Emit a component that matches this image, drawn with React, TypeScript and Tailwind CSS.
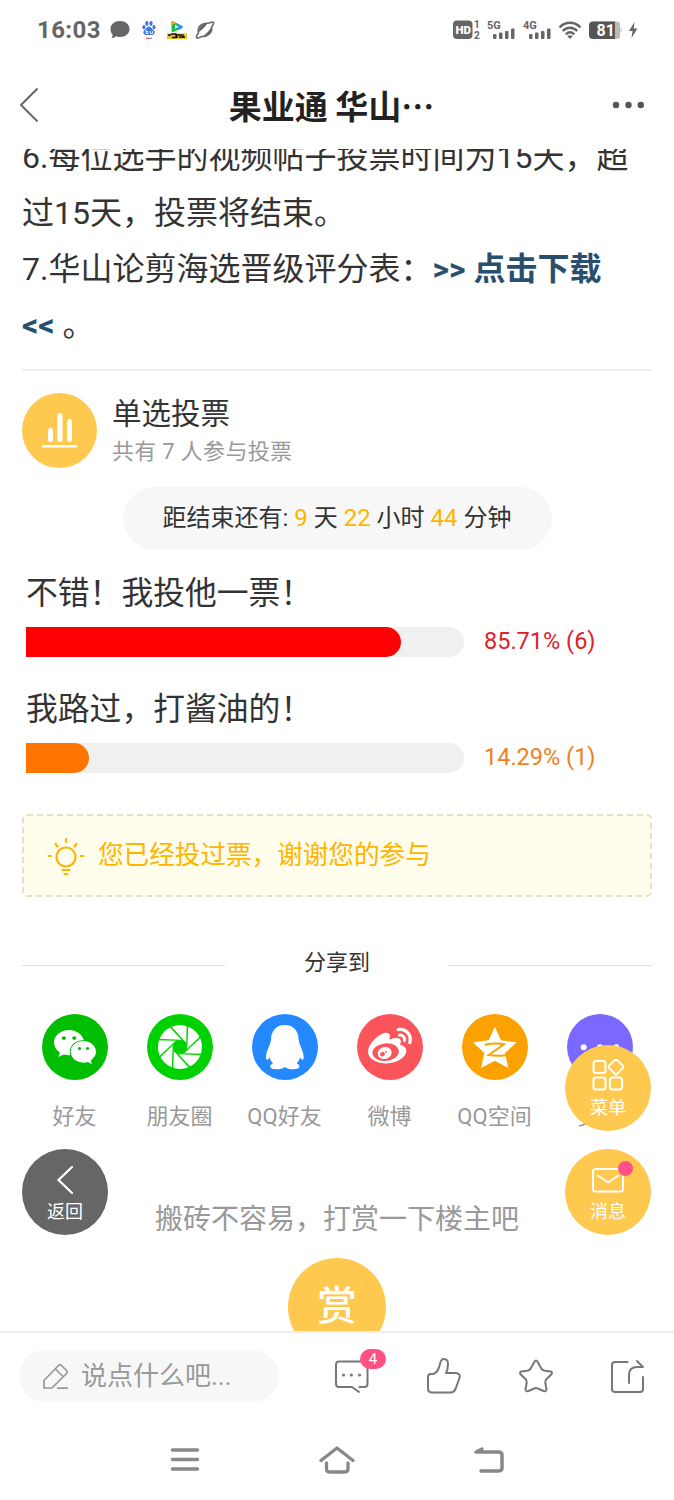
import type { ReactNode } from "react";
import { FaWeibo, FaWeixin } from "react-icons/fa";

interface PollOption {
    id: number;
    label: string;
    percent: number;
    votes: number;
    barClass: string;
    textClass: string;
}

interface ShareTarget {
    name: string;
    bg: string;
    icon: ReactNode;
}

const pollOptions: PollOption[] = [
    { id: 1, label: "不错！我投他一票！", percent: 85.71, votes: 6, barClass: "bg-[#ff0003]", textClass: "text-[#e0202a]" },
    { id: 2, label: "我路过，打酱油的！", percent: 14.29, votes: 1, barClass: "bg-[#ff7500]", textClass: "text-[#f08020]" },
];

const blades = [0, 45, 90, 135, 180, 225, 270, 315];

function MomentsIcon() {
    return (
        <svg viewBox="-99 -99 198 198" className="size-full">
            <circle r="66" fill="#fff" />
            <circle r="21" fill="#00d100" />
            {blades.map((angle) => (
                <path key={angle} d="M20 -68 L25 -68 L22 2 L18 8Z" fill="#00d100" transform={`rotate(${angle})`} />
            ))}
        </svg>
    );
}

function PenguinIcon() {
    return (
        <svg viewBox="756 72 198 198" className="size-full">
            <path
                fill="#fff"
                d="M854.500 105C828 105 813 124 813 150C810 168 798 183 798 202C798 212 804 212 809 202C811 211 815 217 819 220C805 227 808 238 829 238C841 238 849 236 854.500 231C860 236 868 238 880 238C901 238 904 227 890 220C894 217 898 211 900 202C905 212 911 212 911 202C911 183 899 168 896 150C896 124 881 105 854.500 105Z"
            />
        </svg>
    );
}

function QzoneIcon() {
    return (
        <svg viewBox="374 72 198 198" className="size-full">
            <path
                fill="#fff"
                d="M472.500 110L491 151L538 157L503 189L513 234L472.500 212L431 234L441 189L407 157L454 151Z"
            />
            <path d="M442 164Q475 158 500 163L454 195Q485 199 520 195" fill="none" stroke="#fba100" strokeWidth="6" />
        </svg>
    );
}

function MoreDots() {
    return (
        <svg viewBox="688 72 198 198" className="size-full" fill="#fff">
            <circle cx="738" cy="172" r="9" />
            <circle cx="787" cy="172" r="9" />
            <circle cx="836" cy="172" r="9" />
        </svg>
    );
}

const shareTargets: ShareTarget[] = [
    { name: "好友", bg: "bg-[#02be02]", icon: <FaWeixin className="size-[44px] text-white" /> },
    { name: "朋友圈", bg: "bg-[#00d100]", icon: <MomentsIcon /> },
    { name: "QQ好友", bg: "bg-[#2489ff]", icon: <PenguinIcon /> },
    { name: "微博", bg: "bg-[#f9555a]", icon: <FaWeibo className="size-[44px] text-white" /> },
    { name: "QQ空间", bg: "bg-[#fba100]", icon: <QzoneIcon /> },
    { name: "更多", bg: "bg-[#7b68ff]", icon: <MoreDots /> },
];

function SignalBars({ label }: { label: string }) {
    return (
        <svg width="30" height="22" viewBox="0 0 30 22" fill="#666">
            <text x="0" y="10" fontSize="11" fontWeight="700" fontFamily="Roboto, sans-serif">{label}</text>
            <rect x="6" y="15" width="3.500" height="5" rx="1" />
            <rect x="12" y="13.500" width="3.500" height="6.500" rx="1" />
            <rect x="18" y="12" width="3.500" height="8" rx="1" />
            <rect x="24" y="9.500" width="3.500" height="10.500" rx="1" />
        </svg>
    );
}

function StatusBar() {
    return (
        <div className="flex h-[60px] items-center pl-[37px] pr-[36px] text-[#666]">
            <span className="w-[73px] text-[24px] font-bold leading-[60px] tracking-[0.4px]">16:03</span>
            <svg width="20" height="20" viewBox="0 0 20 20" fill="#666">
                <path d="M10 1C15.500 1 19.500 4.500 19.500 9S15.500 17 10 17C8.500 17 7 16.800 6 16.300C4.800 17.500 3 18.300 1.500 18.300C2.300 17.300 2.800 16 2.500 14.500C1 13 .5 11 .5 9C.5 4.500 4.500 1 10 1Z" />
            </svg>
            <svg width="14" height="20" viewBox="0 0 14 20" className="ml-[12px]" fill="#3b76e1">
                <ellipse cx="4.800" cy="3.500" rx="1.600" ry="2.400" />
                <ellipse cx="9" cy="3.500" rx="1.600" ry="2.400" />
                <ellipse cx="1.900" cy="7.200" rx="1.500" ry="2.100" />
                <ellipse cx="12" cy="7.200" rx="1.500" ry="2.100" />
                <path d="M7 6.500C9 6.500 10 9 12 10.500C13.500 12.500 12 15 10 15H4C2 15 .5 12.500 2 10.500C4 9 5 6.500 7 6.500Z" />
                <path d="M4 10V13.500M4 11.500H6V13.500H4M8.500 11V13.500H10.500V11" stroke="#fff" strokeWidth="0.8" fill="none" />
                <path d="M4 18.300H7" stroke="#e33" strokeWidth="1" />
                <path d="M7 18.300H10" stroke="#3b76e1" strokeWidth="1" />
            </svg>
            <svg width="20" height="20" viewBox="0 0 20 20" className="ml-[11px]">
                <path d="M4.500 2C4.500 1 5.500 1 6.500 1.500L15 6C16 6.600 16 7.300 15 8L6.500 12C5.500 12.500 4.800 12 4.600 11Z" fill="#21b84d" />
                <path d="M10 3.300L15 6C16 6.600 16 7.300 15 8L10 10.400Z" fill="#1b9cf0" />
                <path d="M4.500 2C4.500 1 5.500 1 6.500 1.500L9 3L4.600 5Z" fill="#f5a623" />
                <path d="M8 4.800L11.500 6.800L8 8.800Z" fill="#fff" />
                <rect x="0" y="13.500" width="20" height="5.500" fill="#f3bd2c" />
                <path d="M1 15H4M4 14H9V17.500H5M10 14V18M11 15H15M12 17H18M16 14V18" stroke="#111" strokeWidth="1.300" fill="none" />
            </svg>
            <svg width="20" height="20" viewBox="0 0 20 20" className="ml-[8px]" fill="none" stroke="#666">
                <path d="M3.500 13C2 7 6.500 2.500 13 3.300L17.500 2C19.500 2 18.500 4.500 16.500 7C18 12.500 12.500 17 7 16.500L3 18C.5 18 1 16 3.500 13Z" strokeWidth="1.500" />
                <path d="M4 12C3.500 7 7 3 12.500 3.500C10 7 7 10 4 12Z" fill="#666" stroke="none" />
                <path d="M16.500 7C17.500 12 13 16.500 7.500 16.500C11 14 14.500 10.500 16.500 7Z" fill="#666" stroke="none" />
            </svg>
            <svg width="28" height="22" viewBox="0 0 28 22" className="ml-auto" fill="#666">
                <rect x="0" y="1.500" width="19.500" height="18.500" rx="4" />
                <text x="2.500" y="15" fontSize="11.500" fontWeight="900" fill="#fff" fontFamily="Roboto, sans-serif">HD</text>
                <text x="21" y="9" fontSize="10" fontWeight="700" fontFamily="Roboto, sans-serif">1</text>
                <text x="21" y="20" fontSize="10" fontWeight="700" fontFamily="Roboto, sans-serif">2</text>
            </svg>
            <div className="ml-[6px] flex gap-[6px]">
                <SignalBars label="5G" />
                <SignalBars label="4G" />
            </div>
            <svg width="24" height="20" viewBox="0 0 24 20" className="ml-[5px]" fill="none" stroke="#666" strokeWidth="2.400">
                <path d="M1.500 7.500C7.500 1.200 16.500 1.200 22.500 7.500" />
                <path d="M4.700 11C9 6.700 15 6.700 19.300 11" />
                <path d="M7.800 14.300C10.500 11.800 13.500 11.800 16.200 14.300" />
                <path d="M9.300 16.200C11 14.800 13 14.800 14.700 16.200L12 19Z" fill="#666" stroke="none" />
            </svg>
            <svg width="34" height="20" viewBox="0 0 34 20" className="ml-[7px]">
                <path d="M5 1.500H28C30 1.500 31 3 31 5V16C31 18 30 19 28 19H5Z" fill="#bbb" />
                <path d="M31.500 7Q34 10 31.500 13Z" fill="#bbb" />
                <path d="M4 1.500H26V19H4Q0 19 0 15V5.500Q0 1.500 4 1.500Z" fill="#555" />
                <text x="7.500" y="16" fontSize="16" fontWeight="700" fill="#fff" fontFamily="Roboto, sans-serif">81</text>
            </svg>
            <svg width="10" height="18" viewBox="0 0 10 18" className="ml-[5px]" fill="#666">
                <path d="M6.500 1L1 10H4.500L3.500 17L9.500 7.500H5.800Z" />
            </svg>
        </div>
    );
}

function Header() {
    return (
        <header className="flex h-[89px] shrink-0 items-center justify-between pl-[19px] pr-[29px]">
            <svg width="20" height="36" viewBox="0 0 20 36" fill="none" stroke="#666" strokeWidth="2">
                <path d="M18.500 1.500L2 18L18.500 34.500" />
            </svg>
            <h1 className="ml-3 font-['Noto_Sans_CJK_SC',sans-serif] text-[33px] font-bold leading-[60px] text-[#222]">果业通 华山…</h1>
            <svg width="33" height="8" viewBox="0 0 33 8" fill="#555">
                <circle cx="4" cy="4" r="3.200" />
                <circle cx="16.500" cy="4" r="3.200" />
                <circle cx="28.800" cy="4" r="3.200" />
            </svg>
        </header>
    );
}

function FloatButton({ label, className, children }: { label: string; className: string; children: ReactNode }) {
    return (
        <button className={`absolute flex size-[86px] flex-col items-center rounded-full text-[18px] leading-[24px] text-white ${className}`}>
            <span className="flex h-[51px] items-end justify-center pb-[5px]">{children}</span>
            <span>{label}</span>
        </button>
    );
}

function Poll() {
    return (
        <section>
            <div className="flex h-[75px] items-center gap-[15px]">
                <div className="size-[75px] rounded-full bg-[#ffc84e]">
                    <svg viewBox="0 0 75 75" className="size-full" fill="#fff">
                        <rect x="26" y="35" width="5" height="14" rx="2.500" />
                        <rect x="35.500" y="20" width="5" height="29" rx="2.500" />
                        <rect x="45" y="26" width="5" height="23" rx="2.500" />
                        <rect x="20" y="52" width="35" height="2.500" rx="1" />
                    </svg>
                </div>
                <div className="pt-[3px]">
                    <div className="text-[29.500px] leading-[40px] text-[#333]">单选投票</div>
                    <div className="text-[22px] leading-[36px] tracking-[0.300px] text-[#999]">共有 7 人参与投票</div>
                </div>
            </div>
            <div className="mx-auto mt-[19px] h-[63px] w-[429px] rounded-full bg-[#f7f7f7] text-center text-[24px] leading-[63px] text-[#333]">
                距结束还有: <span className="text-[#ffb400]">9</span> 天 <span className="text-[#ffb400]">22</span> 小时{" "}
                <span className="text-[#ffb400]">44</span> 分钟
            </div>
            <div className="ml-[4px] mt-[17px] flex flex-col gap-[26px]">
                {pollOptions.map((option) => (
                    <div key={option.id} className="h-[90px]">
                        <div className="h-[60px] text-[31.800px] leading-[52px] text-[#333]">{option.label}</div>
                        <div className="flex h-[30px] items-center">
                            <div className="h-[30px] w-[438px] overflow-hidden rounded-r-full bg-[#f0f0f0]">
                                <div className={`h-full rounded-r-full ${option.barClass}`} style={{ width: `${option.percent}%` }} />
                            </div>
                            <span className={`ml-[20px] text-[23.500px] ${option.textClass}`}>
                                {option.percent}% ({option.votes})
                            </span>
                        </div>
                    </div>
                ))}
            </div>
        </section>
    );
}

function BottomBar() {
    return (
        <footer className="flex h-[88px] shrink-0 items-center border-t-2 border-[#eee] bg-white pl-[19px] pr-[29px]">
            <div className="flex h-[52px] w-[260px] items-center gap-[12px] rounded-full bg-[#f7f7f7] pl-[23px] text-[26px] text-[#999]">
                <svg width="27" height="27" viewBox="0 0 27 27" fill="none" stroke="#999" strokeWidth="1.700" strokeLinejoin="round">
                    <path d="M2 25V17.500L16.500 2.500Q18 1 19.500 2.500L24.500 7.500Q26 9 24.500 10.500L10 25Z" />
                    <path d="M13.500 6L21.500 14M15 25.200H26" />
                </svg>
                <span>说点什么吧...</span>
            </div>
            <div className="ml-[54px] flex flex-1 items-center justify-between">
                <div className="relative">
                    <svg width="37" height="36" viewBox="0 0 37 36" fill="none" stroke="#777" strokeWidth="2" strokeLinecap="round" strokeLinejoin="round">
                        <path d="M26.500 29H31.500Q34.500 29 34.500 26V6.500Q34.500 3.500 31.500 3.500H6Q3 3.500 3 6.500V26Q3 29 6 29H19L26 34" />
                        <path d="M10.500 17H10.600M18.300 17H18.400M26.500 17H26.600" strokeWidth="3" />
                    </svg>
                    <span className="absolute -top-[9px] left-[27px] h-[20px] w-[26px] rounded-full bg-[#ff5186] text-center text-[15px] leading-[20px] text-white">4</span>
                </div>
                <svg width="36" height="38" viewBox="0 0 36 38" className="ml-[0px]" fill="none" stroke="#777" strokeWidth="2" strokeLinejoin="round">
                    <path d="M5 17H7Q12 16 14 7Q15 2 18 2Q22 2 22 7Q22 12 20 16H30Q35 17 33.500 21L29.500 32Q28 35.500 25 35.500H6Q2 35.500 2 31.500V20Q2 17 5 17Z" />
                </svg>
                <svg width="36" height="36" viewBox="0 0 36 36" fill="none" stroke="#777" strokeWidth="2" strokeLinejoin="round">
                    <path d="M16.300 4Q18 1 19.700 4L23 10Q24 12 26 12.400L32.500 13.500Q35 14.500 33.300 16.500L28.500 21Q27 22.500 27.300 25L28.500 31Q28.500 34 25.500 33L20 30.500Q18 29.500 16 30.500L10.500 33Q7.500 34 7.500 31L8.700 25Q9 22.500 7.500 21L2.700 16.500Q1 14.500 3.500 13.500L10 12.400Q12 12 13 10Z" />
                </svg>
                <svg width="35" height="35" viewBox="0 0 35 35" fill="none" stroke="#777" strokeWidth="2" strokeLinecap="round" strokeLinejoin="round">
                    <path d="M17.500 3H5Q2 3 2 6V30Q2 33 5 33H30Q33 33 33 30V18" />
                    <path d="M19 24V16Q19 8 27 8H33L27 2" />
                </svg>
            </div>
        </footer>
    );
}

export default function App() {
    return (
        <div className="relative flex h-[1500px] w-[674px] flex-col overflow-hidden bg-white font-['Roboto','Noto_Sans_CJK_SC',sans-serif]">
            <StatusBar />
            <Header />

            <main className="h-[1182px] shrink-0 overflow-hidden px-[22px]">
                <div className="-mt-[20px] h-[240px] whitespace-nowrap text-[32px] leading-[56px] text-[#333]">
                    <p>6.每位选手的视频帖子投票时间为15天，超</p>
                    <p>过15天，投票将结束。</p>
                    <p>
                        7.华山论剪海选晋级评分表：<a className="font-bold text-[#28506e]">&gt;&gt; 点击下载</a>
                    </p>
                    <p>
                        <a className="font-bold text-[#28506e]">&lt;&lt;</a> 。
                    </p>
                </div>
                <hr className="mb-[22px] border-t-2 border-[#eee]" />

                <Poll />

                <div className="mt-[41px] flex h-[83px] items-center rounded-[5px] border-2 border-dashed border-[#e4e0cc] bg-[#fffdec] pl-[23px] text-[25.600px] text-[#ffb400]">
                    <svg width="38" height="38" viewBox="0 0 38 38" fill="none" stroke="#ffb400" strokeWidth="2.200" strokeLinecap="round">
                        <circle cx="19" cy="20" r="9.500" />
                        <path d="M19 2V5M8.500 7L10.500 9.500M29.500 7L27.500 9.500M1.500 19H4M34 19H36.500M15.500 33H22.500M17.500 37H20.500" />
                    </svg>
                    <span className="ml-[13px]">您已经投过票，谢谢您的参与</span>
                </div>

                <div className="mt-[45px] flex h-[40px] items-center justify-between text-[22px] text-[#333]">
                    <i className="mt-[6px] h-px w-[203px] bg-[#ddd]" />
                    <span>分享到</span>
                    <i className="mt-[6px] h-px w-[203px] bg-[#ddd]" />
                </div>

                <div className="mt-[32px] flex">
                    {shareTargets.map((target) => (
                        <div key={target.name} className="flex w-[105px] shrink-0 flex-col items-center">
                            <span className={`flex size-[66px] items-center justify-center rounded-full ${target.bg}`}>{target.icon}</span>
                            <span className="mt-[20px] whitespace-nowrap text-[22px] leading-[34px] text-[#999]">{target.name}</span>
                        </div>
                    ))}
                </div>

                <p className="mt-[66px] text-center text-[28px] leading-[40px] text-[#999]">搬砖不容易，打赏一下楼主吧</p>
                <div className="mx-auto mt-[18px] size-[98px] rounded-full bg-[#ffc84e] text-center text-[40px] font-medium leading-[98px] text-white">赏</div>
            </main>

            <BottomBar />

            <nav className="flex flex-1 items-center justify-center gap-[134px]">
                <svg width="30" height="26" viewBox="0 0 30 26" stroke="#888" strokeWidth="3.500" strokeLinecap="round">
                    <path d="M2.500 3H27.500M2.500 12.500H27.500M2.500 22H27.500" />
                </svg>
                <svg width="36" height="30" viewBox="0 0 36 30" className="-ml-[15px]" fill="none" stroke="#888" strokeWidth="3.300" strokeLinecap="round" strokeLinejoin="round">
                    <path d="M2 15.500L18 3L34 15.500M7.500 18V24Q7.500 27 10.500 27H26Q29 27 29 24V18" />
                </svg>
                <svg width="32" height="28" viewBox="0 0 32 28" className="-ml-[16px]" fill="none" stroke="#888" strokeWidth="3.500" strokeLinecap="round" strokeLinejoin="round">
                    <path d="M9 3L3 6H25Q29 6 29 9V22Q29 25 25 25H8" />
                </svg>
            </nav>

            <FloatButton label="菜单" className="left-[565px] top-[1045px] bg-[#ffc84e]">
                <svg width="32" height="32" viewBox="0 0 32 32" fill="none" stroke="#fff" strokeWidth="2">
                    <rect x="1.500" y="2" width="12" height="12" rx="2.500" />
                    <rect x="1.500" y="18.500" width="12" height="12" rx="2.500" />
                    <rect x="18" y="18.500" width="12" height="12" rx="2.500" />
                    <rect x="18.300" y="2.300" width="11.400" height="11.400" rx="2" transform="rotate(45 24 8)" />
                </svg>
            </FloatButton>
            <FloatButton label="消息" className="left-[565px] top-[1149px] bg-[#ffc84e]">
                <svg width="34" height="28" viewBox="0 0 34 28" fill="none" stroke="#fff" strokeWidth="2" strokeLinejoin="round">
                    <rect x="2" y="2" width="30" height="22.500" rx="2.500" />
                    <path d="M6 8L17 15.500L28 8" />
                </svg>
                <i className="absolute left-[53px] top-[12px] size-[15px] rounded-full bg-[#ff5186]" />
            </FloatButton>
            <FloatButton label="返回" className="left-[22px] top-[1149px] bg-[#666]">
                <svg width="18" height="31" viewBox="0 0 18 31" fill="none" stroke="#fff" strokeWidth="2.200" strokeLinecap="round">
                    <path d="M16 3L2.500 16L16 29" />
                </svg>
            </FloatButton>
        </div>
    );
}
